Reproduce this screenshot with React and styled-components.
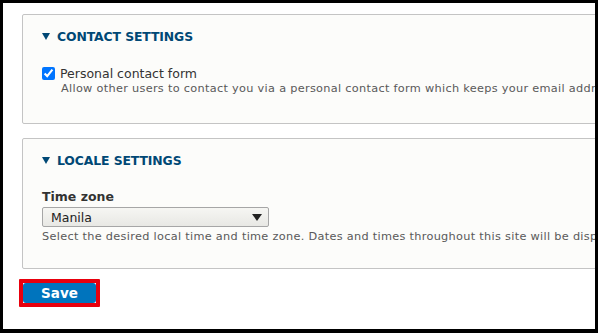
import React from "react";
import styled, { createGlobalStyle } from "styled-components";

const Global = createGlobalStyle`
  html, body {
    margin: 0;
    padding: 0;
    background: #fff;
  }
  body {
    font-family: "DejaVu Sans", Verdana, sans-serif;
    color: #333;
  }
`;

const Frame = styled.div`
  box-sizing: border-box;
  width: 598px;
  height: 333px;
  border: 3px solid #000;
  border-bottom-width: 4px;
  background: #fff;
  overflow: hidden;
  padding: 11px 0 0 19px;
`;

const Fieldset = styled.section`
  box-sizing: border-box;
  width: 620px;
  height: ${(p) => p.$height}px;
  margin-bottom: 14px;
  border: 1px solid #c4c4c4;
  border-radius: 2px;
  background: #fcfcfa;
  padding: 12px 0 0 19px;
`;

const Legend = styled.div`
  display: flex;
  align-items: center;
  gap: 7px;
  font-size: 12.4px;
  font-weight: bold;
  text-transform: uppercase;
  color: #004875;
  height: 18px;
  letter-spacing: -0.1px;
`;

const Triangle = styled.span`
  width: 0;
  height: 0;
  border-left: 4px solid transparent;
  border-right: 4px solid transparent;
  border-top: 7px solid #004875;
`;

const CheckRow = styled.label`
  display: flex;
  align-items: center;
  gap: 5px;
  margin-top: 21px;
  font-size: 12.5px;
  color: #333;
  input {
    margin: 0;
    width: 13px;
    height: 13px;
    accent-color: #0075ff;
  }
`;

const Description = styled.div`
  font-size: 11.3px;
  color: #595959;
  white-space: nowrap;
  margin-top: ${(p) => p.$top || 2}px;
  padding-left: ${(p) => p.$indent || 0}px;
  letter-spacing: 0.3px;
`;

const FieldLabel = styled.div`
  margin-top: 20px;
  font-size: 12.5px;
  font-weight: bold;
  color: #333;
`;

const SelectBox = styled.div`
  box-sizing: border-box;
  width: 227px;
  height: 20px;
  margin-top: 3px;
  display: flex;
  align-items: center;
  justify-content: space-between;
  padding: 0 6px 0 8px;
  border: 1px solid #a6a6a6;
  border-radius: 2px;
  background: linear-gradient(#f6f6f3, #e8e8e4);
  font-size: 12.5px;
  color: #222;
`;

const Arrow = styled.span`
  width: 0;
  height: 0;
  border-left: 5px solid transparent;
  border-right: 5px solid transparent;
  border-top: 7px solid #222;
`;

const Highlight = styled.div`
  box-sizing: border-box;
  display: inline-flex;
  margin-left: -3px;
  margin-top: -4px;
  border: 4px solid #e8000d;
  border-radius: 1px;
`;

const SaveButton = styled.button`
  box-sizing: border-box;
  width: 73px;
  height: 20px;
  border: none;
  border-radius: 3px;
  background: #0074bd;
  color: #fff;
  font-family: "DejaVu Sans", Verdana, sans-serif;
  font-size: 13.5px;
  font-weight: bold;
  padding: 0;
  cursor: pointer;
`;

export default function App() {
  return (
    <>
      <Global />
      <Frame>
        <Fieldset $height={110}>
          <Legend>
            <Triangle />
            Contact settings
          </Legend>
          <CheckRow>
            <input type="checkbox" defaultChecked readOnly />
            Personal contact form
          </CheckRow>
          <Description $indent={19} $top={1}>
            Allow other users to contact you via a personal contact form which keeps your email address hidden.
          </Description>
        </Fieldset>
        <Fieldset $height={131}>
          <Legend>
            <Triangle />
            Locale settings
          </Legend>
          <FieldLabel>Time zone</FieldLabel>
          <SelectBox>
            Manila
            <Arrow />
          </SelectBox>
          <Description $top={3}>
            Select the desired local time and time zone. Dates and times throughout this site will be displayed using this time zone.
          </Description>
        </Fieldset>
        <Highlight>
          <SaveButton>Save</SaveButton>
        </Highlight>
      </Frame>
    </>
  );
}
